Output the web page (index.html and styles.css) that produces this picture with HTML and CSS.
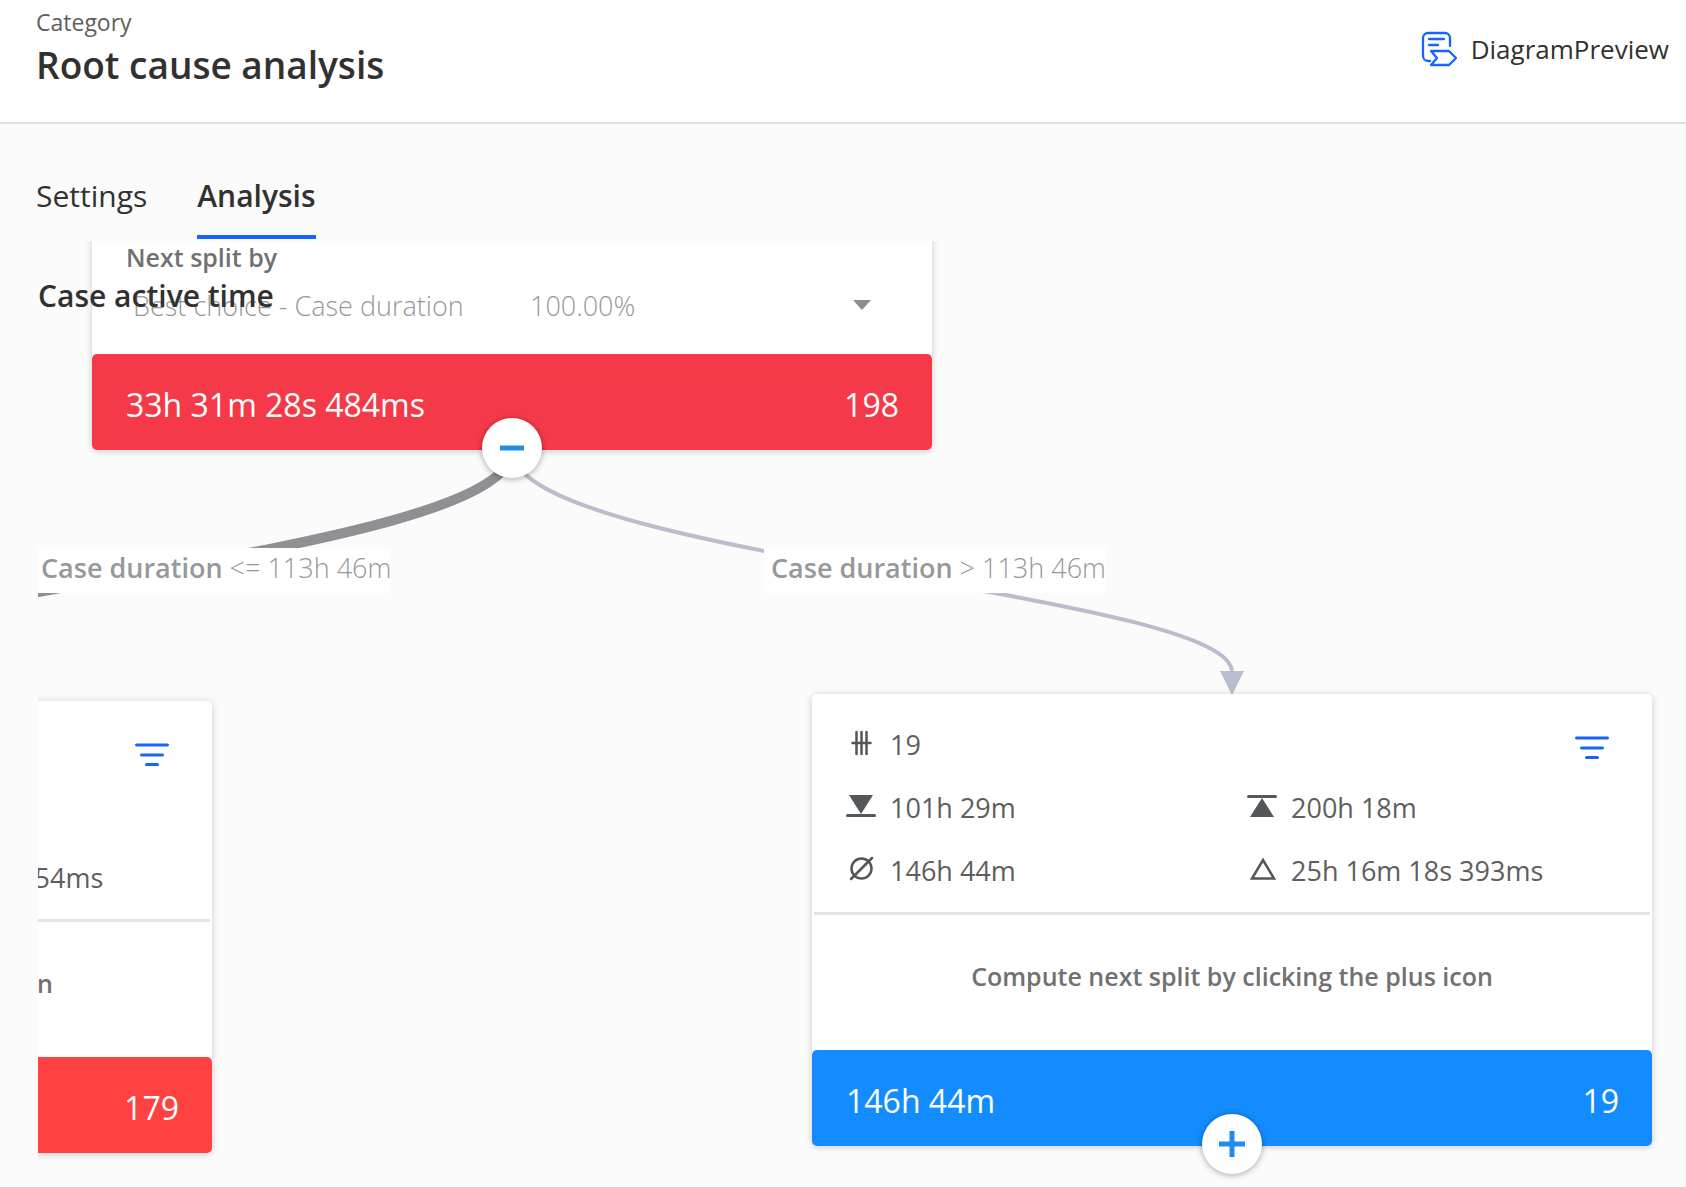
FILE: index.html
```html
<!DOCTYPE html>
<html lang="en">
<head>
    <meta charset="UTF-8">
    <meta name="viewport" content="width=device-width, initial-scale=1.0">
    <title>Root cause analysis</title>
    <link rel="stylesheet" href="styles.css">
</head>
<body>
    <header class="header">
        <div>
            <div class="category">Category</div>
            <h1>Root cause analysis</h1>
        </div>
        <button class="preview" type="button">
            <svg width="36" height="36" viewBox="0 0 36 36" fill="none" stroke="#1664ff" stroke-width="2.300" stroke-linecap="round" stroke-linejoin="round">
                <path d="M29 15V7a5 5 0 0 0-5-5H7a5 5 0 0 0-5 5v18a5 5 0 0 0 5 5h2"/>
                <path d="M8 8h15M8 14h9"/>
                <path d="M10 20h18l7 7-7 7H10l6-7z"/>
            </svg>
            DiagramPreview
        </button>
    </header>

    <nav class="tabs">
        <a class="tab" href="#settings">Settings</a>
        <a class="tab active" href="#analysis">Analysis</a>
    </nav>

    <main class="canvas">
        <!-- edges between the nodes -->
        <svg class="edges" width="1648" height="946" viewBox="38 241 1648 946" fill="none">
            <path d="M512 450C512 557 -208 590 -208 679" stroke="#8f8f94" stroke-width="10"/>
            <path d="M512 450C512 557 1232 592 1232 672" stroke="#babdcd" stroke-width="4"/>
            <path d="M1220 671h24l-12 24z" fill="#babdcd"/>
        </svg>

        <div class="edge-label edge-left"><b>Case duration</b> &lt;= 113h 46m</div>
        <div class="edge-label edge-right"><b>Case duration</b> &gt; 113h 46m</div>

        <section class="node node-root">
            <div class="split">
                <label for="split-by">Next split by</label>
                <div class="split-field">
                    <select id="split-by">
                        <option>Best choice - Case duration</option>
                    </select>
                    <span class="percent">100.00%</span>
                    <svg class="caret" width="18" height="10" viewBox="0 0 18 10"><path d="M0 0h18L9 10z" fill="#8a8c91"/></svg>
                </div>
            </div>
            <div class="node-footer root-red"><span>33h 31m 28s 484ms</span><span>198</span></div>
            <button class="toggle" type="button" aria-label="Collapse">
                <svg width="28" height="28" viewBox="0 0 28 28"><path d="M2 14h24" stroke="#208cee" stroke-width="5"/></svg>
            </button>
        </section>

        <section class="node node-left">
            <button class="filter" type="button" aria-label="Filter">
                <svg width="34" height="24" viewBox="0 0 34 24" stroke="#1664ff" stroke-width="3" stroke-linecap="round"><path d="M1.500 2h31M6.500 12h21M11.500 21.500h11"/></svg>
            </button>
            <div class="stats">
                <div class="stat"></div>
                <div class="stat"></div>
                <div class="stat"></div>
                <div class="stat"></div>
                <div class="stat"></div>
                <div class="stat"><span class="icon"></span>15h 26m 48s 154ms</div>
            </div>
            <p class="hint">Compute next split by clicking the plus icon</p>
            <div class="node-footer red"><span></span><span>179</span></div>
        </section>

        <section class="node node-right">
            <button class="filter" type="button" aria-label="Filter">
                <svg width="34" height="24" viewBox="0 0 34 24" stroke="#1664ff" stroke-width="3" stroke-linecap="round"><path d="M1.500 2h31M6.500 12h21M11.500 21.500h11"/></svg>
            </button>
            <div class="stats">
                <div class="stat">
                    <svg class="icon" viewBox="0 0 30 30" stroke="#53575a" stroke-width="2.500" stroke-linecap="round"><path d="M10.500 2v22M15.500 2v22M20.500 2v22M6.500 13h18"/></svg>
                    19
                </div>
                <div class="stat"></div>
                <div class="stat">
                    <svg class="icon" viewBox="0 0 30 30"><path d="M3 2h24L15 21z" fill="#53575a"/><path d="M1.500 22.500h27" stroke="#53575a" stroke-width="3" stroke-linecap="round"/></svg>
                    101h 29m
                </div>
                <div class="stat">
                    <svg class="icon" viewBox="0 0 30 30"><path d="M3 24h24L15 5z" fill="#53575a"/><path d="M1.500 3.500h27" stroke="#53575a" stroke-width="3" stroke-linecap="round"/></svg>
                    200h 18m
                </div>
                <div class="stat">
                    <svg class="icon" viewBox="0 0 30 30" fill="none" stroke="#53575a" stroke-width="2.500" stroke-linecap="round"><circle cx="15.500" cy="12.500" r="10"/><path d="M5 23L26 2"/></svg>
                    146h 44m
                </div>
                <div class="stat">
                    <svg class="icon" viewBox="0 0 30 30" fill="none" stroke="#53575a" stroke-width="2.500"><path d="M5 22.500h22L16 4z"/></svg>
                    25h 16m 18s 393ms
                </div>
            </div>
            <p class="hint">Compute next split by clicking the plus icon</p>
            <div class="node-footer blue"><span>146h 44m</span><span>19</span></div>
            <button class="toggle" type="button" aria-label="Expand">
                <svg width="28" height="28" viewBox="0 0 28 28"><path d="M1 14h26M14 1v26" stroke="#208cee" stroke-width="5"/></svg>
            </button>
        </section>

        <h2 class="canvas-title">Case active time</h2>
    </main>
</body>
</html>
```
FILE: styles.css
```css
* {
    box-sizing: border-box;
}
body {
    display: flex;
    flex-direction: column;
    min-height: 100vh;
    margin: 0;
    background: #fbfbfb;
    color: #323130;
    font-family: "Open Sans", "Noto Sans", sans-serif;
}
button {
    padding: 0;
    border: 0;
    background: none;
    color: inherit;
    font: inherit;
    cursor: pointer;
}
svg {
    display: block;
}

/* Header */
.header {
    display: flex;
    justify-content: space-between;
    height: 124px;
    padding: 8px 17px 0 36px;
    border-bottom: 2px solid #e1e1e1;
    background: #fff;
}
.category {
    color: #605e5c;
    font-size: 23px;
    line-height: 29px;
}
h1 {
    margin: 0;
    font-size: 37px;
    font-weight: 600;
    line-height: 56px;
}
.preview {
    display: flex;
    align-items: center;
    gap: 14px;
    height: 82px;
    font-size: 26px;
}

/* Tabs */
.tabs {
    display: flex;
    gap: 50px;
    height: 117px;
    padding: 43px 36px 0;
}
.tab {
    height: 72px;
    color: inherit;
    font-size: 30px;
    line-height: 58px;
    text-decoration: none;
}
.tab.active {
    border-bottom: 4px solid #1664ff;
    font-weight: 600;
}

/* Tree canvas */
.canvas {
    position: relative;
    flex: 1;
    margin-left: 38px;
    overflow: hidden;
}
.canvas-title {
    position: absolute;
    top: 35px;
    left: 0;
    margin: 0;
    font-size: 30px;
    font-weight: 600;
    line-height: 40px;
}
.edges {
    position: absolute;
    top: 0;
    left: 0;
}
.edge-label {
    position: absolute;
    top: 307px;
    height: 45px;
    padding-left: 7px;
    background: #fff;
    color: #96999b;
    font-size: 27px;
    font-weight: 300;
    line-height: 40px;
    white-space: nowrap;
}
.edge-label b {
    font-weight: 600;
}
.edge-left {
    left: -4px;
}
.edge-right {
    left: 726px;
}

/* Nodes */
.node {
    position: absolute;
    width: 840px;
    border-radius: 5px;
    background: #fff;
    box-shadow: 0 1px 7px rgba(0, 0, 0, 0.2);
    color: #605e5c;
}
.node-root {
    top: -20px;
    left: 54px;
}
.node-left {
    top: 460px;
    left: -666px;
}
.node-right {
    top: 453px;
    left: 774px;
}
.filter {
    position: absolute;
    top: 42px;
    right: 43px;
}
.stats {
    display: grid;
    grid-template-columns: 401px 1fr;
    grid-auto-rows: 63px;
    margin: 0 2px;
    padding: 19px 0 10px 32px;
    border-bottom: 3px solid #e4e4e4;
}
.stat {
    display: flex;
    align-items: center;
    gap: 14px;
    font-size: 27px;
    white-space: nowrap;
}
.icon {
    width: 30px;
    height: 30px;
}
.hint {
    margin: 0;
    padding: 43px 0 56px;
    color: #717171;
    font-size: 25px;
    font-weight: 600;
    line-height: 36px;
    text-align: center;
}
.node-footer {
    display: flex;
    justify-content: space-between;
    height: 96px;
    padding: 0 33px 0 34px;
    border-radius: 5px;
    color: #fff;
    font-size: 32px;
    line-height: 102px;
}
.root-red {
    background: #f43a49;
}
.red {
    background: #ff4141;
}
.blue {
    background: #128cff;
}
.toggle {
    position: absolute;
    bottom: -28px;
    left: 390px;
    display: flex;
    align-items: center;
    justify-content: center;
    width: 60px;
    height: 60px;
    border-radius: 50%;
    background: #fff;
    box-shadow: 0 1px 6px rgba(0, 0, 0, 0.35);
}

/* Split selector */
.split {
    height: 133px;
    padding: 18px 34px 0;
}
.split label {
    display: block;
    color: #717171;
    font-size: 25px;
    font-weight: 600;
    line-height: 36px;
}
.split-field {
    display: grid;
    grid-template-columns: 404px 1fr 18px;
    align-items: center;
    height: 60px;
    padding-right: 27px;
    color: #96999b;
    font-size: 27px;
    font-weight: 300;
}
.split-field select {
    grid-area: 1 / 1 / 2 / 4;
    width: 100%;
    padding: 0 7px;
    border: 0;
    background: none;
    color: inherit;
    font: inherit;
    appearance: none;
}
.percent {
    grid-area: 1 / 2;
    pointer-events: none;
}
.caret {
    grid-area: 1 / 3;
    pointer-events: none;
}
```
